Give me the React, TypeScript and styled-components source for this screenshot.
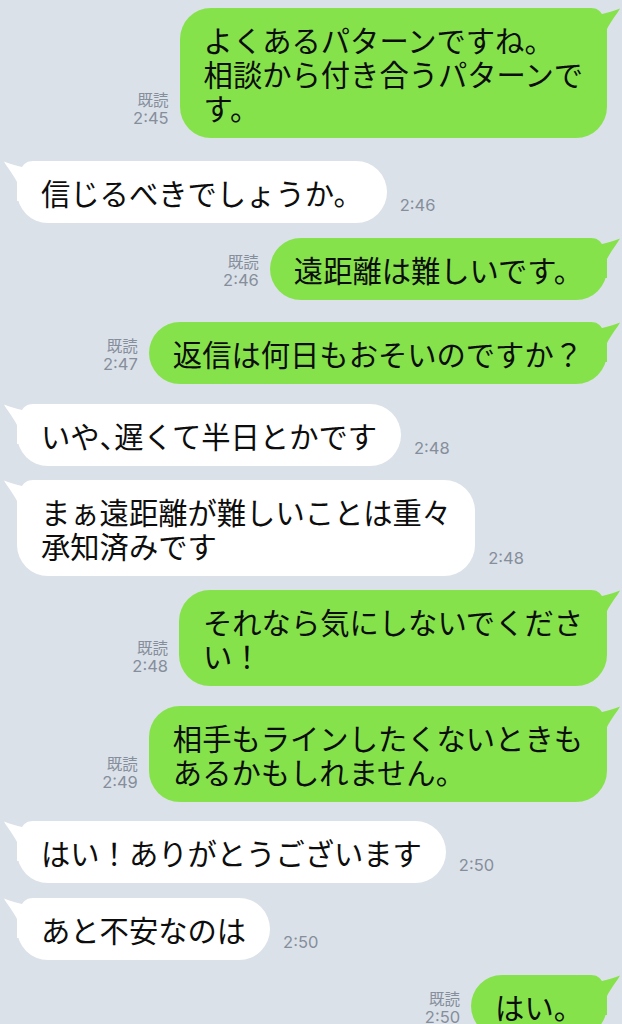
import React from "react";
import styled, { createGlobalStyle } from "styled-components";

const GlobalStyle = createGlobalStyle`
  html, body {
    margin: 0;
    padding: 0;
    background: #dbe1e9;
  }
  body {
    font-family: "Noto Sans CJK JP", "Noto Sans", sans-serif;
    overflow: hidden;
  }
`;

const Chat = styled.div`
  display: flex;
  flex-direction: column;
  width: 622px;
  height: 1024px;
  box-sizing: border-box;
  padding: 0 15px 0 17px;
  overflow: hidden;
  background: #dbe1e9;
`;

const Row = styled.div<{ $mine: boolean; $mt: number }>`
  display: flex;
  flex-direction: row;
  align-items: flex-end;
  justify-content: ${(p) => (p.$mine ? "flex-end" : "flex-start")};
  gap: ${(p) => (p.$mine ? "11px" : "13px")};
  margin-top: ${(p) => p.$mt}px;
  flex-shrink: 0;
`;

const Bubble = styled.div<{ $mine: boolean }>`
  position: relative;
  background: ${(p) => (p.$mine ? "#85e24b" : "#ffffff")};
  color: #0d0d0d;
  border-radius: 31px;
  padding: 14px 24px;
  font-size: 29.3px;
  line-height: 34px;
  font-family: "Noto Sans CJK JP", sans-serif;
`;

const Line = styled.span`
  position: relative;
  display: block;
  white-space: nowrap;
`;

const Half = styled.span`
  font-feature-settings: "halt";
`;

const TailSvg = styled.svg<{ $mine: boolean }>`
  position: absolute;
  top: 0;
  width: 43px;
  height: 40px;
  ${(p) =>
    p.$mine
      ? "right: -13px;"
      : "left: -13px; transform: scaleX(-1);"}
`;

const Meta = styled.div<{ $mine: boolean }>`
  display: flex;
  flex-direction: column;
  align-items: flex-end;
  margin-bottom: ${(p) => (p.$mine ? "10px" : "8px")};
  color: #858e9b;
  font-family: "Inter", "Noto Sans", sans-serif;
  font-size: 16.5px;
  line-height: 19px;
  flex-shrink: 0;
`;

const Read = styled.span`
  font-family: "Noto Sans CJK JP", sans-serif;
  font-size: 15.5px;
  line-height: 19px;
`;

type Msg = {
  mine: boolean;
  lines: string[];
  time: string;
  mt: number;
};

const messages: Msg[] = [
  { mine: true, lines: ["よくあるパターンですね。", "相談から付き合うパターンで", "す。"], time: "2:45", mt: 8 },
  { mine: false, lines: ["信じるべきでしょうか。"], time: "2:46", mt: 23 },
  { mine: true, lines: ["遠距離は難しいです。"], time: "2:46", mt: 15 },
  { mine: true, lines: ["返信は何日もおそいのですか？"], time: "2:47", mt: 22 },
  { mine: false, lines: ["いや、遅くて半日とかです"], time: "2:48", mt: 20 },
  { mine: false, lines: ["まぁ遠距離が難しいことは重々", "承知済みです"], time: "2:48", mt: 14 },
  { mine: true, lines: ["それなら気にしないでくださ", "い！"], time: "2:48", mt: 14 },
  { mine: true, lines: ["相手もラインしたくないときも", "あるかもしれません。"], time: "2:49", mt: 20 },
  { mine: false, lines: ["はい！ありがとうございます"], time: "2:50", mt: 19 },
  { mine: false, lines: ["あと不安なのは"], time: "2:50", mt: 15 },
  { mine: true, lines: ["はい。"], time: "2:50", mt: 15 },
];

function renderLine(text: string) {
  const parts = text.split("、");
  return parts.map((part, i) => (
    <React.Fragment key={i}>
      {part}
      {i < parts.length - 1 && <Half>、</Half>}
    </React.Fragment>
  ));
}

function Tail({ mine }: { mine: boolean }) {
  const fill = mine ? "#85e24b" : "#ffffff";
  return (
    <TailSvg $mine={mine} viewBox="0 0 43 40" aria-hidden="true">
      <path
        d="M0,0 L14,0 C20,0 23,3 25,6 C30,5 37,3 43,0.5 C40,6 34,13 30,21 L30,40 L0,40 Z"
        fill={fill}
      />
    </TailSvg>
  );
}

function Message({ m }: { m: Msg }) {
  const bubble = (
    <Bubble $mine={m.mine}>
      <Tail mine={m.mine} />
      {m.lines.map((l, i) => (
        <Line key={i}>{renderLine(l)}</Line>
      ))}
    </Bubble>
  );
  const meta = (
    <Meta $mine={m.mine}>
      {m.mine && <Read>既読</Read>}
      <span>{m.time}</span>
    </Meta>
  );
  return (
    <Row $mine={m.mine} $mt={m.mt}>
      {m.mine ? (
        <>
          {meta}
          {bubble}
        </>
      ) : (
        <>
          {bubble}
          {meta}
        </>
      )}
    </Row>
  );
}

export default function App() {
  return (
    <>
      <GlobalStyle />
      <Chat>
        {messages.map((m, i) => (
          <Message key={i} m={m} />
        ))}
      </Chat>
    </>
  );
}
